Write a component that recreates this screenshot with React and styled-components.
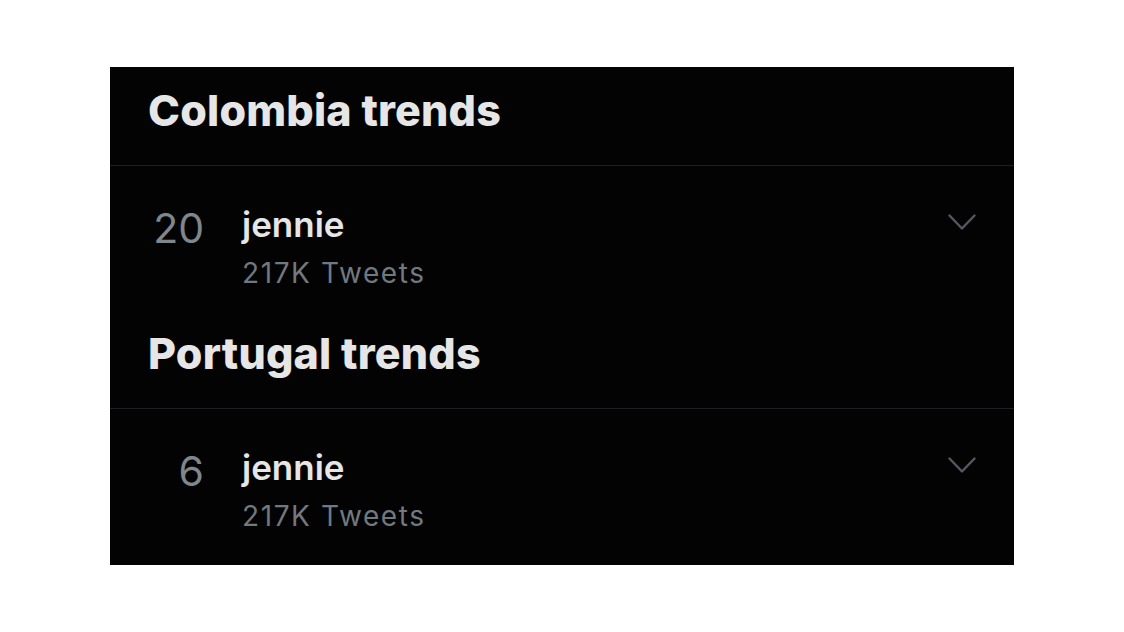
import React from "react";
import styled, { createGlobalStyle } from "styled-components";

const trends = [
  { region: "Colombia", rank: 20, name: "jennie", count: "217K Tweets" },
  { region: "Portugal", rank: 6, name: "jennie", count: "217K Tweets" },
];

const Chevron = () => (
  <ChevronSvg width="28" height="17" viewBox="0 0 28 17">
    <polyline
      points="1.5,1.5 14,14.5 26.5,1.5"
      fill="none"
      stroke="#55595d"
      strokeWidth="2.4"
      strokeLinecap="round"
      strokeLinejoin="round"
    />
  </ChevronSvg>
);

const App = () => {
  return (
    <>
      <GlobalStyle />
      <Page>
        <Panel>
          {trends.map((t, i) => (
            <Section key={`trend_${i}`}>
              <Header>{t.region} trends</Header>
              <Divider />
              <Row>
                <Rank>{t.rank}</Rank>
                <Info>
                  <Name>{t.name}</Name>
                  <Count>{t.count}</Count>
                </Info>
                <Chevron />
              </Row>
            </Section>
          ))}
        </Panel>
      </Page>
    </>
  );
};
export default App;

const GlobalStyle = createGlobalStyle`
  body {
    margin: 0;
    background: #ffffff;
    font-family: Inter, "Liberation Sans", sans-serif;
  }
`;

const Page = styled.div`
  padding: 67px 0 0 110px;
`;

const Panel = styled.div`
  width: 904px;
  height: 498px;
  background: #030303;
  overflow: hidden;
`;

const Section = styled.div`
  display: flex;
  flex-direction: column;
`;

const Header = styled.h2`
  box-sizing: border-box;
  height: 98px;
  margin: 0;
  padding: 18px 0 0 38px;
  font-size: 43px;
  line-height: 50px;
  font-weight: 800;
  color: #e6e6e6;
  letter-spacing: 0.2px;
`;

const Divider = styled.div`
  height: 1px;
  background: #1d1f22;
`;

const Row = styled.div`
  box-sizing: border-box;
  height: 144px;
  padding: 37px 38px 0 40px;
  display: grid;
  grid-template-columns: 54px 1fr auto;
  column-gap: 38px;
  align-items: start;
`;

const Rank = styled.div`
  text-align: right;
  font-size: 41px;
  line-height: 50px;
  font-weight: 400;
  color: #7f878c;
`;

const Info = styled.div`
  display: flex;
  flex-direction: column;
`;

const Name = styled.div`
  font-size: 35px;
  line-height: 42px;
  font-weight: 600;
  color: #e6e6e6;
`;

const Count = styled.div`
  margin-top: 10px;
  font-size: 28px;
  line-height: 36px;
  font-weight: 400;
  color: #71797e;
  letter-spacing: 1.6px;
`;

const ChevronSvg = styled.svg`
  display: block;
  margin-top: 11px;
`;
